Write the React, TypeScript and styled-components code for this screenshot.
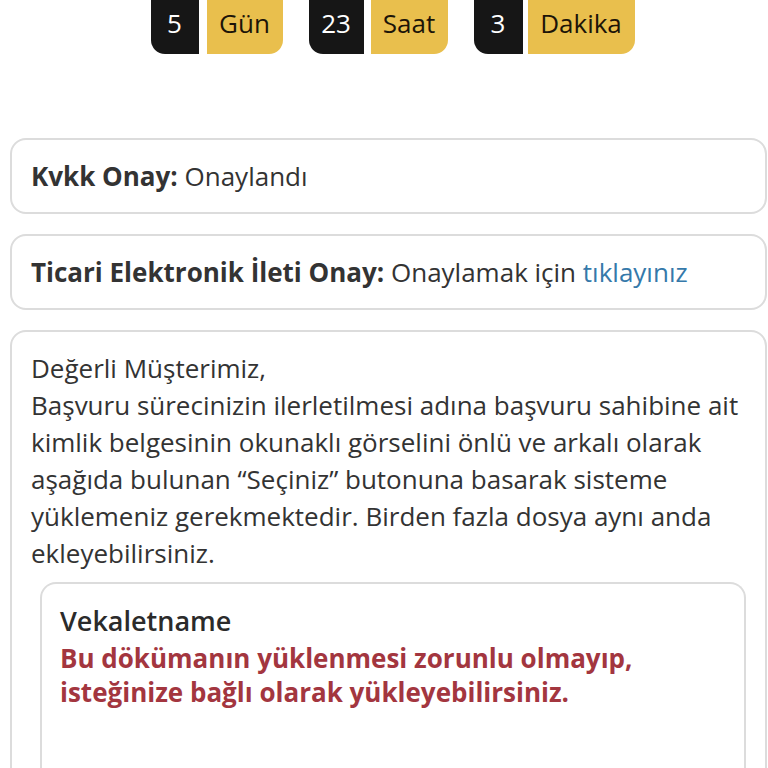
import React from "react";
import styled, { createGlobalStyle } from "styled-components";

const GlobalStyle = createGlobalStyle`
  html, body {
    margin: 0;
    padding: 0;
    background: #ffffff;
  }
  body {
    font-family: "Open Sans", "Liberation Sans", sans-serif;
    color: #333333;
    overflow: hidden;
  }
`;

const Page = styled.div`
  width: 768px;
  padding: 0 1px 0 10px;
  box-sizing: border-box;
`;

const Countdown = styled.div`
  display: flex;
  justify-content: center;
  gap: 26px;
  margin-top: -16px;
  padding-left: 8px;
  height: 70px;
  margin-bottom: 84px;
`;

const TimeGroup = styled.div`
  display: flex;
  gap: ${(p: { $gap: number }) => p.$gap}px;
`;

const TimeValue = styled.div`
  background: #161616;
  color: #ffffff;
  border-radius: 14px 0 0 14px;
  display: flex;
  align-items: center;
  justify-content: center;
  padding: 8px 0 0;
  font-size: 26px;
`;

const TimeUnit = styled.div`
  background: #e9bf4d;
  color: #1c1408;
  border-radius: 0 14px 14px 0;
  display: flex;
  align-items: center;
  justify-content: center;
  padding: 8px 0 0;
  font-size: 26px;
`;

const Card = styled.div`
  border: 2px solid #dcdcdc;
  border-radius: 16px;
  padding: 18px 19px 17px;
  margin-bottom: 20px;
  font-size: 26px;
  line-height: 37px;
  color: #333333;
`;

const Label = styled.b`
  font-weight: 700;
`;

const Link = styled.a`
  color: #3579aa;
  text-decoration: none;
`;

const Paragraph = styled.p`
  margin: 0;
`;

const DocCard = styled.div`
  margin: 10px 0 0 9px;
  border: 2px solid #dcdcdc;
  border-bottom: none;
  border-radius: 16px 16px 0 0;
  padding: 17px 18px 60px;
  min-height: 200px;
`;

const DocTitle = styled.div`
  font-size: 27px;
  line-height: 40px;
  font-weight: 600;
  color: #2b2b2b;
`;

const DocNote = styled.div`
  font-size: 26px;
  line-height: 34px;
  font-weight: 700;
  color: #a3363f;
`;

const times = [
  { value: "5", unit: "Gün", valueWidth: 48, unitWidth: 76, gap: 8 },
  { value: "23", unit: "Saat", valueWidth: 55, unitWidth: 77, gap: 7 },
  { value: "3", unit: "Dakika", valueWidth: 49, unitWidth: 107, gap: 5 },
];

export default function App() {
  return (
    <>
      <GlobalStyle />
      <Page>
        <Countdown>
          {times.map((t) => (
            <TimeGroup key={t.unit} $gap={t.gap}>
              <TimeValue style={{ width: t.valueWidth }}>{t.value}</TimeValue>
              <TimeUnit style={{ width: t.unitWidth }}>{t.unit}</TimeUnit>
            </TimeGroup>
          ))}
        </Countdown>

        <Card>
          <Label>Kvkk Onay:</Label> Onaylandı
        </Card>

        <Card>
          <Label>Ticari Elektronik İleti Onay:</Label> Onaylamak için{" "}
          <Link href="#">tıklayınız</Link>
        </Card>

        <Card>
          <Paragraph>
            Değerli Müşterimiz,
            <br />
            Başvuru sürecinizin ilerletilmesi adına başvuru sahibine ait
            kimlik belgesinin okunaklı görselini önlü ve arkalı olarak
            aşağıda bulunan “Seçiniz” butonuna basarak sisteme yüklemeniz
            gerekmektedir. Birden fazla dosya aynı anda ekleyebilirsiniz.
          </Paragraph>
          <DocCard>
            <DocTitle>Vekaletname</DocTitle>
            <DocNote>
              Bu dökümanın yüklenmesi zorunlu olmayıp,
              <br />
              isteğinize bağlı olarak yükleyebilirsiniz.
            </DocNote>
          </DocCard>
        </Card>
      </Page>
    </>
  );
}
